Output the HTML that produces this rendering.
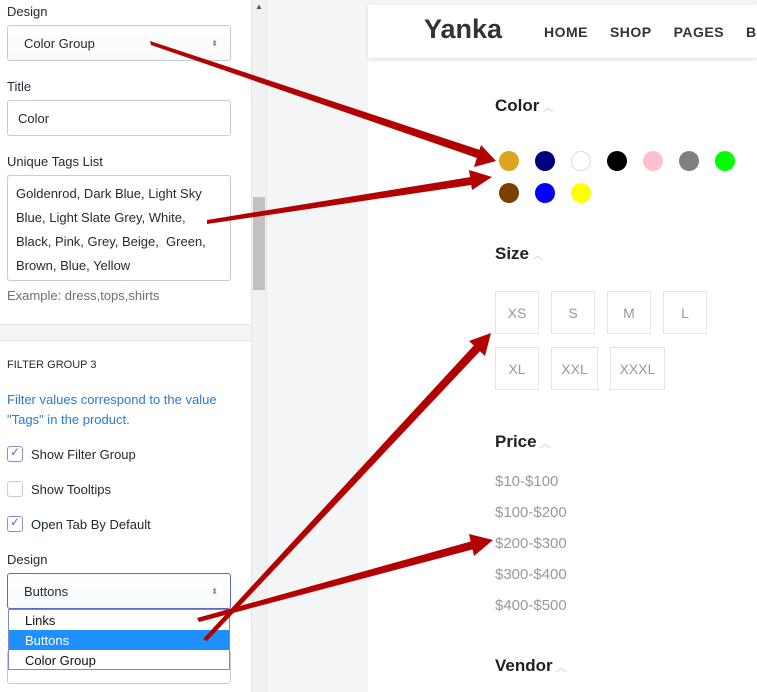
<!DOCTYPE html>
<html><head><style>
*{box-sizing:border-box;margin:0;padding:0}
body{width:757px;height:692px;overflow:hidden;position:relative;font-family:"Liberation Sans",sans-serif;background:#f4f5f7}
.a{position:absolute}
.lp{left:0;top:0;width:251px;height:692px;background:#fff}
.lbl{font-size:13px;color:#212b36}
.inp{border:1px solid #c4cdd5;border-radius:3px;background:#fff;font-size:13px;color:#212b36;padding-left:10px}
.sel{background:linear-gradient(#fff,#f9fafb);padding-left:16px}
.cb{width:16px;height:16px;border:1px solid #8a8fc4;border-radius:3px;background:#fff}
.cb.off{border-color:#c4cdd5}
.sw{width:20px;height:20px;border-radius:50%}
.bx{border:1px solid #e5e5e5;height:43px;font-size:14px;color:#999;display:flex;align-items:center;justify-content:center}
.h{font-size:17px;font-weight:bold;color:#222}
.pr{font-size:15px;color:#999;left:495px}
.ch{color:#ccc;font-weight:normal;font-size:11px;margin-left:3px}
</style></head><body>
<div class="a lp"></div>
<div class="a lbl" style="left:7px;top:4px">Design</div>
<div class="a inp sel" style="left:7px;top:25px;width:224px;height:36px;line-height:35px">Color Group<span style="position:absolute;right:12px;top:0;font-size:8px;color:#888">⬍</span></div>
<div class="a lbl" style="left:7px;top:79px">Title</div>
<div class="a inp" style="left:7px;top:100px;width:224px;height:36px;line-height:35px">Color</div>
<div class="a lbl" style="left:7px;top:154px">Unique Tags List</div>
<div class="a inp" style="left:7px;top:175px;width:224px;height:106px;padding:6px 8px;line-height:24px">Goldenrod, Dark Blue, Light Sky Blue, Light Slate Grey, White, Black, Pink, Grey, Beige,&nbsp; Green, Brown, Blue, Yellow</div>
<div class="a" style="left:7px;top:288px;font-size:13px;color:#637381">Example: dress,tops,shirts</div>
<div class="a" style="left:0;top:324px;width:251px;height:17px;background:#f4f5f7;border-top:1px solid #dfe3e8;border-bottom:1px solid #dfe3e8"></div>
<div class="a" style="left:7px;top:359px;font-size:11px;color:#212b36">FILTER GROUP 3</div>
<div class="a" style="left:7px;top:390px;width:240px;font-size:13px;line-height:20px;color:#2a7bd1">Filter values correspond to the value "Tags" in the product.</div>
<div class="a cb" style="left:7px;top:446px"><span style="position:absolute;left:2px;top:-2px;font-size:12px;color:#5c6ac4">✓</span></div>
<div class="a lbl" style="left:31px;top:447px">Show Filter Group</div>
<div class="a cb off" style="left:7px;top:481px"></div>
<div class="a lbl" style="left:31px;top:482px">Show Tooltips</div>
<div class="a cb" style="left:7px;top:516px"><span style="position:absolute;left:2px;top:-2px;font-size:12px;color:#5c6ac4">✓</span></div>
<div class="a lbl" style="left:31px;top:517px">Open Tab By Default</div>
<div class="a lbl" style="left:7px;top:552px">Design</div>
<div class="a inp" style="left:7px;top:650px;width:224px;height:34px"></div>
<div class="a inp sel" style="left:7px;top:573px;width:224px;height:36px;line-height:35px;border:1px solid #5c6ac4">Buttons<span style="position:absolute;right:12px;top:0;font-size:8px;color:#888">⬍</span></div>
<div class="a" style="left:8px;top:609px;width:222px;height:61px;background:#fff;border:1px solid #7a8cc4;font-size:13px;color:#111">
<div style="height:20px;line-height:21px;padding-left:16px">Links</div>
<div style="height:20px;line-height:21px;padding-left:16px;background:#1e90ff;color:#fff">Buttons</div>
<div style="height:20px;line-height:21px;padding-left:16px">Color Group</div></div>
<div class="a" style="left:251px;top:0;width:16px;height:692px;background:#f1f1f1;border-left:1px solid #e5e5e5;border-right:1px solid #e5e5e5"></div>
<div class="a" style="left:253px;top:197px;width:12px;height:93px;background:#c1c1c1"></div>
<div class="a" style="left:255px;top:2px;font-size:8px;color:#555">▲</div>
<div class="a" style="left:368px;top:5px;width:389px;height:687px;background:#fff"></div>
<div class="a" style="left:368px;top:5px;width:389px;height:53px;background:#fff;box-shadow:0 2px 4px rgba(0,0,0,.12)"></div>
<div class="a" style="left:424px;top:14px;font-size:27px;font-weight:bold;color:#333">Yanka</div>
<div class="a" style="left:544px;top:24px;font-size:14px;font-weight:bold;color:#333;letter-spacing:.5px;white-space:nowrap">HOME&nbsp;&nbsp;&nbsp;&nbsp;&nbsp;SHOP&nbsp;&nbsp;&nbsp;&nbsp;&nbsp;PAGES&nbsp;&nbsp;&nbsp;&nbsp;&nbsp;BLOG</div>
<div class="a h" style="left:495px;top:96px">Color<span class="ch">︿</span></div>
<div class="a sw" style="left:499px;top:151px;background:#daa520"></div>
<div class="a sw" style="left:535px;top:151px;background:#000080"></div>
<div class="a sw" style="left:571px;top:151px;background:#fff;border:1px solid #ddd"></div>
<div class="a sw" style="left:607px;top:151px;background:#000"></div>
<div class="a sw" style="left:643px;top:151px;background:#ffc0cb"></div>
<div class="a sw" style="left:679px;top:151px;background:#808080"></div>
<div class="a sw" style="left:715px;top:151px;background:#0f0"></div>
<div class="a sw" style="left:499px;top:183px;background:#7b3f00"></div>
<div class="a sw" style="left:535px;top:183px;background:#00f"></div>
<div class="a sw" style="left:571px;top:183px;background:#ff0"></div>
<div class="a h" style="left:495px;top:244px">Size<span class="ch">︿</span></div>
<div class="a bx" style="left:495px;top:291px;width:44px">XS</div>
<div class="a bx" style="left:551px;top:291px;width:44px">S</div>
<div class="a bx" style="left:607px;top:291px;width:44px">M</div>
<div class="a bx" style="left:663px;top:291px;width:44px">L</div>
<div class="a bx" style="left:495px;top:347px;width:44px">XL</div>
<div class="a bx" style="left:551px;top:347px;width:47px">XXL</div>
<div class="a bx" style="left:610px;top:347px;width:55px">XXXL</div>
<div class="a h" style="left:495px;top:432px">Price<span class="ch">︿</span></div>
<div class="a pr" style="top:473px">$10-$100</div>
<div class="a pr" style="top:504px">$100-$200</div>
<div class="a pr" style="top:535px">$200-$300</div>
<div class="a pr" style="top:566px">$300-$400</div>
<div class="a pr" style="top:597px">$400-$500</div>
<div class="a h" style="left:495px;top:656px">Vendor<span class="ch">︿</span></div>
<svg class="a" style="left:0;top:0" width="757" height="692">
<g fill="#b30000">
<polygon points="150,41 151,45 480,159 483,151"/><polygon points="496,161 474,167 481,145"/>
<polygon points="207,220 207,224 478,184 477,176"/><polygon points="492,177 472,190 469,170"/>
<polygon points="203,639 207,641 483,348 477,342"/><polygon points="491,333 485,356 469,341"/>
<polygon points="197,618 199,622 478,548 476,540"/><polygon points="493,540 474,556 469,534"/>
</g></svg>
</body></html>
